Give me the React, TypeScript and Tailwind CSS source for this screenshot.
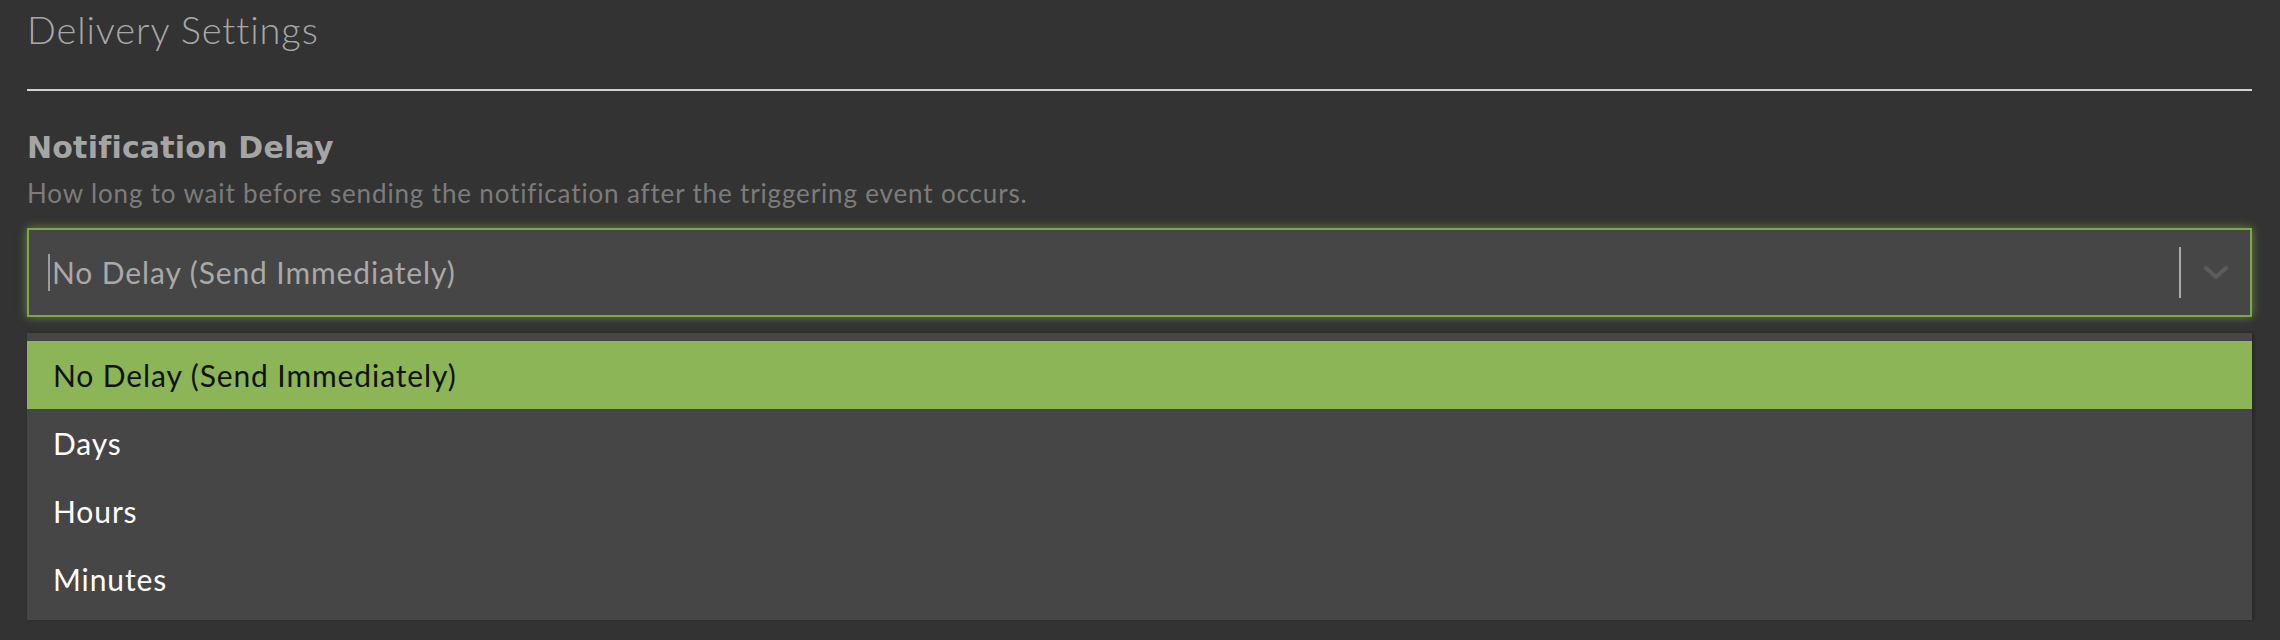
import React from "react";

const options = ["No Delay (Send Immediately)", "Days", "Hours", "Minutes"];

export default function App() {
  return (
    <div
      className="w-[2280px] h-[640px] bg-[#333333] pl-[27px] pr-[28px] overflow-hidden"
      style={{ fontFamily: "Lato, 'Open Sans', sans-serif" }}
    >
      <h1 className="pt-[6px] text-[38px] leading-[46px] font-light tracking-[0.9px] text-[#a8a8a8]">
        Delivery Settings
      </h1>
      <div className="mt-[37px] h-[2px] bg-[#d2d2d2]" />
      <div className="mt-[39px] text-[30px] leading-[36px] font-bold tracking-[0.2px] text-[#a5a5a5] font-['DejaVu_Sans',sans-serif]">
        Notification Delay
      </div>
      <div className="mt-[12px] text-[26px] leading-[30px] tracking-[0.85px] text-[#7c7c7c]">
        How long to wait before sending the notification after the triggering event occurs.
      </div>
      <div className="mt-[20px] h-[89px] flex items-center bg-[#464646] border-2 border-[#7fa84b] shadow-[0_0_9px_rgba(130,180,70,0.65)]">
        <div className="flex-1 flex items-center pl-[19px]">
          <span className="w-[2px] h-[37px] bg-[#9c9c9c] mr-[2px]" />
          <span className="text-[30px] tracking-[0.9px] text-[#a9a9a9]">No Delay (Send Immediately)</span>
        </div>
        <span className="w-[2px] h-[51px] bg-[#a9a9a9]" />
        <div className="w-[69px] flex items-center justify-center">
          <svg width="26" height="16" viewBox="0 0 26 16">
            <polyline points="3,3 13,12 23,3" fill="none" stroke="#5c5c5c" strokeWidth="4" strokeLinecap="round" strokeLinejoin="round" />
          </svg>
        </div>
      </div>
      <div className="mt-[16px] bg-[#464646] pt-[8px] pb-[7px] shadow-[2px_0_3px_rgba(0,0,0,0.25)]">
        {options.map((o, i) => (
          <div
            key={o}
            className={
              i === 0
                ? "h-[68px] flex items-center pl-[26px] bg-[#8bb556] text-[#111111] text-[30px] tracking-[0.9px]"
                : "h-[68px] flex items-center pl-[26px] text-white text-[30px] tracking-[0.9px]"
            }
          >
            {o}
          </div>
        ))}
      </div>
    </div>
  );
}
